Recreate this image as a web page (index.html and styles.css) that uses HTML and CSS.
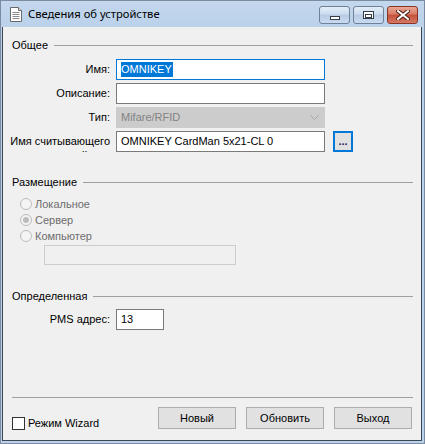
FILE: index.html
```html
<!DOCTYPE html>
<html lang="ru">
<head>
  <meta charset="UTF-8">
  <title>Сведения об устройстве</title>
  <link rel="stylesheet" href="styles.css">
</head>
<body>
  <div class="window">
    <div class="titlebar">
      <svg class="app-icon" width="12" height="15" viewBox="0 0 12 15">
        <path d="M0.5 0.5h8l3 3v11h-11z" fill="#fff" stroke="#6b6b6b"/>
        <path d="M8.5 0.5v3h3" fill="#e8e8e8" stroke="#6b6b6b"/>
        <path d="M2.5 5.5h7M2.5 7.5h7M2.5 9.5h7M2.5 11.5h7" stroke="#8a8a8a"/>
      </svg>
      <span class="title">Сведения об устройстве</span>
      <div class="caption-buttons">
        <span class="cap"><i class="glyph-min"></i></span>
        <span class="cap"><i class="glyph-max"></i></span>
        <span class="cap cap-close">
          <svg width="14" height="10" viewBox="0 0 14 10">
            <path d="M2 1l10 8M12 1l-10 8" stroke="#4a1c14" stroke-width="4" stroke-linecap="square"/>
            <path d="M2 1l10 8M12 1l-10 8" stroke="#fff" stroke-width="2" stroke-linecap="square"/>
          </svg>
        </span>
      </div>
    </div>

    <div class="client">
      <section class="group">
        <div class="group-head">Общее</div>
        <div class="form">
          <div class="label">Имя:</div>
          <div class="field field-focus"><span class="selection">OMNIKEY</span></div>

          <div class="label">Описание:</div>
          <div class="field"></div>

          <div class="label">Тип:</div>
          <div class="field field-select">
            Mifare/RFID
            <svg class="chevron" width="9" height="5" viewBox="0 0 9 5"><path d="M0.5 0.5l4 4 4-4" fill="none" stroke="#a6a6a6"/></svg>
          </div>

          <div class="label">Имя считывающего устройства</div>
          <div class="field">OMNIKEY CardMan 5x21-CL 0</div>
          <div class="browse">...</div>
        </div>
      </section>

      <section class="group group-place">
        <div class="group-head">Размещение</div>
        <div class="radios">
          <div class="radio"><span class="dot"></span>Локальное</div>
          <div class="radio"><span class="dot dot-on"></span>Сервер</div>
          <div class="radio"><span class="dot"></span>Компьютер</div>
        </div>
        <div class="field field-off"></div>
      </section>

      <section class="group group-fixed">
        <div class="group-head">Определенная</div>
        <div class="form">
          <div class="label">PMS адрес:</div>
          <div class="field field-short">13</div>
        </div>
      </section>

      <div class="footer">
        <div class="separator"></div>
        <div class="footer-row">
          <div class="check"><span class="box"></span>Режим Wizard</div>
          <div class="buttons">
            <div class="button">Новый</div>
            <div class="button">Обновить</div>
            <div class="button">Выход</div>
          </div>
        </div>
      </div>
    </div>
  </div>
</body>
</html>
```

FILE: styles.css
```css
body {margin: 0; background: #b9d1ea; font: 11px/14px "Liberation Sans", Arial, sans-serif; color: #000;}

.window {width: 425px; height: 444px; box-sizing: border-box; display: flex; flex-direction: column; border: 1px solid #7b8ca0; padding: 0 2px 2px 1px; background: linear-gradient(#c3d7ed, #b9d1ea 30px);}

.titlebar {height: 26px; display: flex; align-items: center; flex: none;}
.app-icon {margin: 1px 6px 0 8px;}
.title {font: 11.2px/16px "Noto Sans", "Liberation Sans", sans-serif; color: #000;}
.caption-buttons {margin-left: auto; margin-right: 4px; display: flex; gap: 3px; align-self: flex-start; margin-top: 5px;}
.cap {width: 31px; height: 18px; box-sizing: border-box; border: 1px solid #6f8198; border-radius: 3px; display: flex; align-items: center; justify-content: center; background: linear-gradient(#e3edf8, #cbdbee 45%, #b6cae3 50%, #c9dbef);}
.cap-close {border-color: #8c3424; background: linear-gradient(#eaa896, #d77a63 45%, #c5503a 50%, #d47862);}
.glyph-min {width: 10px; height: 4px; box-sizing: border-box; border: 1px solid #333c47; background: #fff; margin-top: 6px;}
.glyph-max {width: 11px; height: 8px; box-sizing: border-box; border: 1px solid #333c47; background: #fff; position: relative;}
.glyph-max::after {content: ""; position: absolute; left: 1px; top: 2px; width: 5px; height: 2px; border: 1px solid #333c47;}

.client {flex: 1; display: flex; flex-direction: column; background: #f0f0f0; border: 1px solid #3d4854; border-top: 0; padding: 11px 8px 10px 9px;}

.group-head {display: flex; align-items: center; height: 14px;}
.group-head::after {content: ""; flex: 1; height: 1px; background: #a0a0a0; margin-left: 6px;}

.form {display: grid; grid-template-columns: 107px 209px 20px; column-gap: 6px; row-gap: 3px; margin: 7px 0 0 -9px; align-items: start;}
.label {height: 21px; overflow: hidden; text-align: right; padding-top: 3px; box-sizing: border-box; grid-column: 1;}

.field {height: 21px; box-sizing: border-box; border: 1px solid #7a7a7a; background: #fff; padding: 2px 4px; line-height: 15px; white-space: nowrap; position: relative;}
.field-focus {border-color: #0078d7;}
.selection {display: inline-block; background: #0078d7; color: #fff; padding: 0 1px 0 0;}
.field-select {background: #cccccc; border-color: #cccccc; color: #838383;}
.chevron {position: absolute; right: 5px; top: 7px;}
.browse {width: 20px; height: 21px; box-sizing: border-box; border: 2px solid #0078d7; background: #e1e1e1; margin-left: 2px; text-align: center; font-weight: bold; color: #1d1b63; line-height: 17px;}

.group-place {margin-top: 23px;}
.radios {margin: 7px 0 0 8px;}
.radio {height: 16px; display: flex; align-items: center; color: #6d6d6d;}
.dot {width: 12px; height: 12px; box-sizing: border-box; border: 1px solid #bcbcbc; border-radius: 50%; background: #f4f4f4; margin-right: 3px; display: flex; align-items: center; justify-content: center;}
.dot-on::after {content: ""; width: 6px; height: 6px; border-radius: 50%; background: #bcbcbc;}
.field-off {width: 192px; height: 20px; margin: 1px 0 0 32px; border-color: #cccccc; background: #f0f0f0;}

.group-fixed {margin-top: 24px;}
.group-fixed .form {margin-top: 6px;}
.field-short {width: 48px;}

.footer {margin-top: auto;}
.separator {height: 1px; background: #a0a0a0; margin-bottom: 9px;}
.footer-row {display: flex; align-items: flex-start;}
.check {display: flex; align-items: center; margin-top: 9px; height: 14px;}
.box {width: 13px; height: 13px; box-sizing: border-box; border: 1px solid #333; background: #fff; margin-right: 3px;}
.buttons {margin-left: auto; margin-right: 1px; display: flex; gap: 10px;}
.button {width: 78px; height: 22px; box-sizing: border-box; border: 1px solid #adadad; background: #e1e1e1; text-align: center; line-height: 20px;}
```
